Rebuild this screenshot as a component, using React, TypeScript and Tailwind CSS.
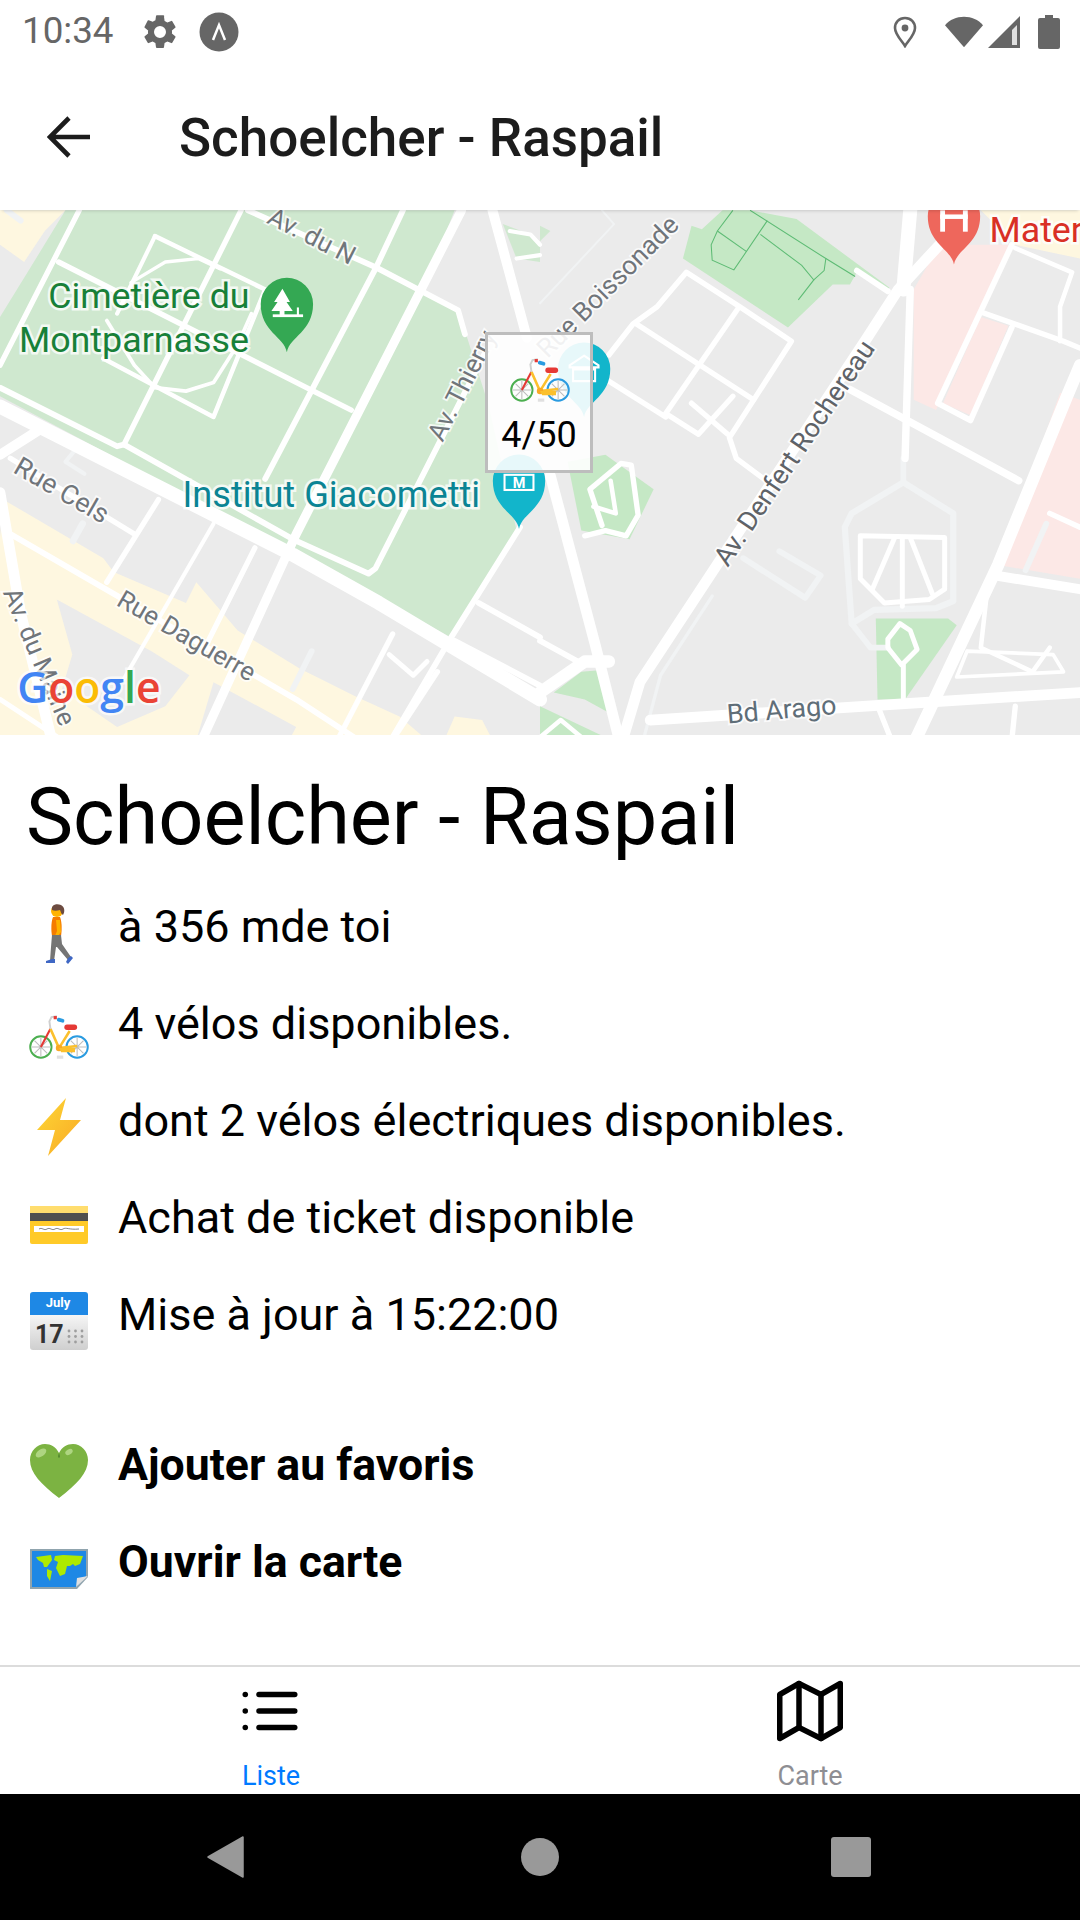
import { FiList, FiMap } from "react-icons/fi";

const roboto = { fontFamily: "Roboto, sans-serif" };

type Road = [string, number];

// coordinates below are in zoomed-crop units, the groups scale them back
const leftRoads: Road[] = [
  ["0,600 850,1030 1100,1170 1568,1450", 34],
  ["0,740 110,670", 24],
  ["230,30 0,480", 13],
  ["700,30 450,530 360,710", 13],
  ["1170,30 1090,200 770,810", 14],
  ["1340,30 860,970 590,1560", 22],
  ["720,30 1090,195 1330,320 1350,390", 14],
  ["170,180 900,550 1020,610", 13],
  ["450,105 340,330", 10],
  ["450,105 770,260 620,630 300,460", 11],
  ["380,240 480,180 575,170 640,200", 8],
  ["310,350 390,480 450,545 540,555 620,530 690,420 730,330", 9],
  ["0,545 340,715 360,710 860,990 1070,1085 1090,1070 1410,440", 14],
  ["1510,950 1310,1270 1140,1560", 14],
  ["30,750 390,970", 13],
  ["460,870 310,1110", 13],
  ["740,1010 590,1310", 13],
  ["620,940 360,1390", 10],
  ["30,970 860,1450 1040,1568", 14],
  ["0,850 60,1200 150,1568", 26],
  ["0,1450 180,1568", 12],
  ["1140,1260 980,1568", 13],
  ["1270,1370 1140,1568", 13],
  ["1130,1320 1200,1380 1240,1340", 12],
  ["1320,1280 1568,1410", 14],
  ["1390,1170 1568,1270", 14],
  ["1430,30 1530,400", 24],
  ["1480,90 1540,100 1568,130", 10],
  ["1500,170 1568,160", 10],
];

const leftFaint: Road[] = [
  ["215,730 190,760 245,795", 10],
  ["240,940 212,990", 16],
  ["905,1310 850,1420", 14],
  ["20,30 60,60", 14],
];

const rightRoads: Road[] = [
  ["1160,130 1040,260 950,400 520,1050 290,1400 240,1568", 26],
  ["1568,480 1530,570 1330,1060 1090,1568", 30],
  ["1075,30 1055,260", 34],
  ["1075,260 1060,750", 18],
  ["900,550 1390,815", 18],
  ["1320,1090 1568,1130", 24],
  ["320,1510 1568,1430", 26],
  ["200,450 270,360 340,310 425,210 580,310 730,410 550,690 570,750 650,810", 13],
  ["280,360 620,580", 13],
  ["575,315 365,620 460,680 560,570", 13],
  ["440,590 545,680", 13],
  ["190,520 365,630", 13],
  ["920,205 1010,265", 14],
  ["1370,130 1155,590 1250,640 1370,370", 14],
  ["1280,325 1520,410 1568,430", 13],
  ["1380,140 1545,210 1510,310 1510,410", 11],
  ["1480,910 1568,950", 13],
  ["930,975 1175,980 1175,1130 1130,1160 1000,1170 930,1100 930,975", 12],
  ["1030,980 965,1130", 12],
  ["1052,980 1052,1180", 12],
  ["1075,980 1140,1145", 12],
  ["130,975 190,960 250,975 285,915 265,770 235,765 145,840 180,945", 13],
  ["205,815 220,910 155,890", 11],
  ["1010,1300 1050,1350 1095,1305 1075,1250 1045,1230 1010,1275 1010,1300", 12],
  ["1055,1350 1055,1450", 12],
  ["30,800 160,1290 230,1568", 26],
  ["0,1280 110,1340", 14],
  ["0,1430 130,1340 200,1340", 30],
  ["1300,1120 1280,1300 1430,1370 1480,1300", 11],
  ["1240,1310 1210,1385 1520,1370 1490,1320 1240,1310", 9],
  ["1380,1470 1370,1568", 13],
  ["985,1480 1020,1568", 13],
  ["0,1560 60,1510 130,1568", 11],
];

const rightFaint: Road[] = [
  ["1055,820 1200,910 1200,1165 1150,1185 970,1190 905,1230 885,950 905,910 1055,820", 15],
  ["1055,750 1055,820", 14],
  ["695,1020 815,1090 770,1155 590,1040", 14],
  ["905,1230 960,1300 1010,1300", 14],
  ["1470,940 1410,1075", 14],
  ["0,300 215,70 180,30", 5],
  ["500,1150 350,1380 300,1568", 8],
];

function Roads({ list, color }: { list: Road[]; color: string }) {
  return (
    <g fill="none" stroke={color} strokeLinejoin="round" strokeLinecap="round">
      {list.map(([points, width], i) => (
        <polyline key={i} points={points} strokeWidth={width * 1.2} />
      ))}
    </g>
  );
}

function Label({ x, y, size, color, rotate, children }: { x: number; y: number; size: number; color: string; rotate?: number; children: string }) {
  return (
    <text
      x={x}
      y={y}
      fontSize={size}
      fill={color}
      stroke="#ffffff"
      strokeOpacity={0.75}
      strokeWidth={size * 0.14}
      paintOrder="stroke"
      transform={rotate ? `rotate(${rotate} ${x} ${y})` : undefined}
      style={roboto}
    >
      {children}
    </text>
  );
}

function Pin({ x, y, color }: { x: number; y: number; color: string }) {
  // x,y is the tip of the pin
  return <path d={`M${x} ${y}c-8-45-76-60-76-140a76 76 0 0 1 152 0c0 80-68 95-76 140z`} fill={color} />;
}

function MapView() {
  return (
    <svg viewBox="0 210 1080 525" className="block w-full h-full">
      <rect x="0" y="210" width="1080" height="525" fill="#ebebeb" />
      <g transform="translate(0 200) scale(0.3444)">
        <polygon points="0,30 190,30 130,90 70,180 0,130" fill="#fef7e0" />
        <polygon points="190,30 1320,30 1230,260 1330,320 1350,380 1420,600 1500,960 1310,1270 1090,1150 0,570 0,340 80,210" fill="#cfe8cf" />
        <polygon points="1460,70 1540,100 1568,130 1568,180 1500,170" fill="#cfe8cf" />
        <polygon points="10,870 300,1040 330,1080 540,1170 570,1110 690,1250 870,1360 1030,1440 1160,1500 1240,1568 820,1568 350,1568 0,1568 0,980" fill="#fef7e0" />
        <polygon points="165,1160 440,1310 550,1380 480,1470 340,1530 180,1420 210,1320" fill="#ebebeb" />
        <polygon points="620,1400 860,1530 840,1568 570,1568" fill="#ebebeb" />
        <polygon points="1290,1568 1320,1500 1400,1510 1430,1568" fill="#fef7e0" />
        <Roads list={leftFaint} color="#f1f3f4" />
        <Roads list={leftRoads} color="#ffffff" />
        <Pin x={833} y={442} color="#34a853" />
        <path d="M820 258l22 38h-10l18 26h-24v12h-14v-12h-24l18-26h-10z" fill="#ffffff" />
        <rect x="792" y="332" width="88" height="8" fill="#ffffff" />
        <rect x="862" y="312" width="6" height="22" fill="#ffffff" />
        <Pin x={1507} y={955} color="#12b5cb" />
        <rect x="1465" y="798" width="84" height="44" fill="none" stroke="#ffffff" strokeWidth="6" />
        <text x="1507" y="837" fontSize="42" fontWeight="700" fill="#ffffff" textAnchor="middle" style={roboto}>M</text>
        <Label x={140} y={315} size={104} color="#188038">Cimetière du</Label>
        <Label x={55} y={440} size={104} color="#188038">Montparnasse</Label>
        <Label x={530} y={890} size={105} color="#0b8494">Institut Giacometti</Label>
        <Label x={772} y={65} size={75} color="#70757a" rotate={27}>Av. du N</Label>
        <Label x={35} y={790} size={78} color="#70757a" rotate={30}>Rue Cels</Label>
        <Label x={335} y={1175} size={75} color="#70757a" rotate={30}>Rue Daguerre</Label>
        <Label x={8} y={1140} size={75} color="#70757a" rotate={67}>Av. du Maine</Label>
        <Label x={1285} y={705} size={75} color="#70757a" rotate={-63}>Av. Thierry</Label>
        <text x="50" y="1460" fontSize="124" fontWeight="600" stroke="#ffffff" strokeOpacity={0.7} strokeWidth="14" paintOrder="stroke" style={{ fontFamily: '"Open Sans", sans-serif' }}>
          <tspan fill="#4285f4">G</tspan>
          <tspan fill="#ea4335">o</tspan>
          <tspan fill="#fbbc05">o</tspan>
          <tspan fill="#4285f4">g</tspan>
          <tspan fill="#34a853">l</tspan>
          <tspan fill="#ea4335">e</tspan>
        </text>
      </g>
      <g transform="translate(540 200) scale(0.3444)">
        <polygon points="530,30 610,30 745,55 1015,255 1000,265 920,210 900,245 850,245 720,370 415,170 440,75 470,85" fill="#c5e8c5" />
        <polygon points="80,760 190,740 330,840 260,985 120,960" fill="#c5e8c5" />
        <polygon points="975,1215 1185,1215 1210,1235 1060,1450 980,1450" fill="#c5e8c5" />
        <polygon points="40,1430 120,1370 180,1365 220,1500 130,1450" fill="#c5e8c5" />
        <polygon points="0,1470 190,1560 0,1568" fill="#c5e8c5" />
        <polygon points="0,75 30,90 0,120" fill="#cfe8cf" />
        <polygon points="1160,130 1085,260 1085,580 1150,610 1370,130" fill="#fce8e6" />
        <polygon points="1280,340 1360,365 1250,625 1170,590" fill="#fce8e6" />
        <polygon points="1510,560 1568,580 1568,1100 1330,1060" fill="#fce8e6" />
        <polygon points="1280,30 1568,30 1568,170 1380,130" fill="#fef7e0" />
        <g fill="none" stroke="#5dbb74" strokeWidth="3">
          <polyline points="560,30 515,90 497,130 500,175 563,203 660,60" />
          <polyline points="515,90 600,150" />
          <polyline points="610,30 830,170 915,222" />
          <polyline points="640,100 760,190 795,232 750,290" />
          <polyline points="830,170 825,205 795,232" />
        </g>
        <Roads list={rightFaint} color="#f1f3f4" />
        <Roads list={rightRoads} color="#ffffff" />
        <Pin x={128} y={630} color="#12b5cb" />
        <Pin x={1202} y={187} color="#ee675c" />
        <rect x="1162" y="30" width="14" height="62" fill="#ffffff" />
        <rect x="1228" y="30" width="14" height="62" fill="#ffffff" />
        <rect x="1162" y="42" width="80" height="13" fill="#ffffff" />
        <path d="M128 452l42 28v6h-84v-6zM96 492h64v34h-64z" fill="none" stroke="#ffffff" strokeWidth="6" />
        <Label x={1305} y={122} size={104} color="#d93025">Mater</Label>
        <Label x={22} y={462} size={76} color="#70757a" rotate={-45}>Rue Boissonade</Label>
        <Label x={545} y={1068} size={78} color="#5f6368" rotate={-56}>Av. Denfert Rochereau</Label>
        <Label x={545} y={1520} size={78} color="#5f6e78" rotate={-5}>Bd Arago</Label>
      </g>
    </svg>
  );
}

function Walker() {
  return (
    <svg viewBox="0 0 64 64" className="w-[64px] h-[64px] shrink-0 mt-[14px]">
      <circle cx="30" cy="9" r="6" fill="#ffb300" />
      <path d="M25 8c-1-5 4-7 9-5 4 2 4 7 2 10-2-1-2-3-3-5-3 1-6 1-8 0z" fill="#6d4c41" />
      <path d="M26 15h7c2 5 2 13 1 19h-9c-1-6-1-14 1-19z" fill="#f57c00" />
      <path d="M29 18h4l1 12-3 4h-3l2-5z" fill="#ffb300" />
      <path d="M25 33h9l1 9 9 13-3 3-11-13-1 0-2 14h-4l1-14z" fill="#757575" />
      <path d="M19 59l6-2h3v4h-9zM41 56l3-2 2 2-5 6-2-2z" fill="#3f67c4" />
    </svg>
  );
}

function Bike({ className }: { className: string }) {
  return (
    <svg viewBox="2 2 60 60" className={className}>
      <g fill="none">
        <circle cx="15" cy="47" r="10" stroke="#4caf50" strokeWidth="1.8" />
        <circle cx="49" cy="47" r="10" stroke="#2a9be0" strokeWidth="1.8" />
        <path d="M15 38v18M6 47h18M9 41l12 12M21 41l-12 12M49 38v18M40 47h18M43 41l12 12M55 41l-12 12" stroke="#bdbdbd" strokeWidth="1" />
        <path d="M15 47l9-17" stroke="#e53935" strokeWidth="2" />
        <path d="M24 30l8 18 10-16M32 48l17-2" stroke="#fbc02d" strokeWidth="2.4" />
        <path d="M24 30l-1-7 2-4 5-1" stroke="#cfcfcf" strokeWidth="1.8" />
      </g>
      <rect x="27" y="18" width="3" height="3" fill="#e53935" />
      <rect x="30" y="20" width="7" height="3.5" rx="1.5" fill="#2a9be0" transform="rotate(15 33 22)" />
      <rect x="37" y="26" width="12" height="5" rx="2.5" fill="#e53935" />
      <circle cx="32" cy="48" r="3" fill="#f9a825" />
      <path d="M32 48h15v4H34z" fill="#fbc02d" />
      <rect x="30" y="55" width="6" height="3" fill="#e0e0e0" />
    </svg>
  );
}

function Lightning() {
  return (
    <svg viewBox="0 0 64 64" className="w-[64px] h-[64px] shrink-0 mt-[14px]">
      <defs>
        <linearGradient id="bolt" x1="0" y1="0" x2="1" y2="1">
          <stop offset="0" stopColor="#fdd835" />
          <stop offset="1" stopColor="#f9a825" />
        </linearGradient>
      </defs>
      <path d="M39 2L10 34h18L21 60l33-36H33z" fill="url(#bolt)" strokeLinejoin="round" />
    </svg>
  );
}

function Card() {
  return (
    <svg viewBox="0 0 64 64" className="w-[64px] h-[64px] shrink-0 mt-[14px]">
      <rect x="3" y="13" width="58" height="38" rx="2" fill="#ffca28" />
      <rect x="3" y="13" width="58" height="8" fill="#ffdd6e" />
      <rect x="3" y="20" width="58" height="8" fill="#4f4f4f" />
      <rect x="7" y="33" width="50" height="6" fill="#ffffff" />
      <path d="M12 36c3-2 5 2 8 0s5 2 8 0 5 2 8 0 6 1 16 0" fill="none" stroke="#666666" strokeWidth="0.8" />
    </svg>
  );
}

function Calendar() {
  const dots = [0, 1, 2].flatMap((r) => [0, 1, 2].map((c) => [42 + c * 6.5, 41 + r * 5.5]));
  return (
    <svg viewBox="0 0 64 64" className="w-[64px] h-[64px] shrink-0 mt-[14px]">
      <defs>
        <linearGradient id="page" x1="0" y1="0" x2="0" y2="1">
          <stop offset="0.4" stopColor="#f5f5f5" />
          <stop offset="1" stopColor="#cfcfcf" />
        </linearGradient>
      </defs>
      <rect x="3" y="2" width="58" height="58" rx="3" fill="url(#page)" />
      <path d="M3 5a3 3 0 0 1 3-3h52a3 3 0 0 1 3 3v20H3z" fill="#1e88e5" />
      <text x="31" y="17" fontSize="13" fontWeight="700" fill="#ffffff" textAnchor="middle" style={roboto}>July</text>
      <text x="8" y="53" fontSize="25" fontWeight="700" fill="#333333" style={roboto}>17</text>
      {dots.map(([x, y], i) => (
        <circle key={i} cx={x} cy={y} r="1.4" fill="#9e9e9e" />
      ))}
    </svg>
  );
}

function Heart() {
  return (
    <svg viewBox="0 0 64 64" className="w-[64px] h-[64px] shrink-0 mt-[14px]">
      <path d="M32 58C14 44 3 33 3 20 3 11 10 4 18 4c6 0 11 3 14 9 3-6 8-9 14-9 8 0 15 7 15 16 0 13-11 24-29 38z" fill="#7cb342" />
      <path d="M32 13c-1 2-1 4-1 4l1 1 1-1s0-2-1-4z" fill="#558b2f" />
      <ellipse cx="14" cy="13" rx="6" ry="3.5" fill="#aed581" transform="rotate(-35 14 13)" />
      <ellipse cx="42" cy="12" rx="4" ry="2.5" fill="#aed581" transform="rotate(-30 42 12)" />
    </svg>
  );
}

function WorldMap() {
  return (
    <svg viewBox="0 0 64 64" className="w-[64px] h-[64px] shrink-0 mt-[14px]">
      <path d="M3 12h58v28L50 52H3z" fill="#90a4ae" />
      <path d="M5 14h54v25L49 50H5z" fill="#1e88e5" />
      <path d="M9 20l15-2 1 5-5 7-3 0-1-4-5-3zM20 32l5 2-2 10-3-5zM28 19l8-1 20 1-3 8-5 2-2-2-3 2-3 0-2 8-5 2-4-8 2-6-4-2z" fill="#aeea00" />
      <path d="M49 50l1-9 11-2z" fill="#e0e0e0" />
    </svg>
  );
}

function StatusBar() {
  return (
    <div className="h-[63px] shrink-0 flex items-center pl-[22px] pr-[20px] bg-white text-[#666666]">
      <span className="text-[36.75px] leading-none" style={roboto}>10:34</span>
      <svg viewBox="0 0 24 24" className="w-[40px] h-[40px] ml-[26px]" fill="#666666">
        <path d="M19.14 12.94c.04-.3.06-.61.06-.94s-.02-.64-.07-.94l2.03-1.58a.5.5 0 0 0 .12-.61l-1.92-3.32a.5.5 0 0 0-.59-.22l-2.39.96c-.5-.38-1.03-.7-1.62-.94l-.36-2.54A.48.48 0 0 0 13.92 2h-3.84a.48.48 0 0 0-.47.41l-.36 2.54c-.59.24-1.13.57-1.62.94l-2.39-.96a.49.49 0 0 0-.59.22L2.73 8.87a.48.48 0 0 0 .12.61l2.03 1.58c-.05.3-.08.62-.08.94s.02.64.07.94l-2.03 1.58a.5.5 0 0 0-.12.61l1.92 3.32c.12.22.37.29.59.22l2.39-.96c.5.38 1.03.7 1.62.94l.36 2.54c.05.24.24.41.48.41h3.84c.24 0 .44-.17.47-.41l.36-2.54c.59-.24 1.13-.56 1.62-.94l2.39.96c.22.08.47 0 .59-.22l1.92-3.32a.48.48 0 0 0-.12-.61l-2.01-1.58zM12 15.6a3.6 3.6 0 1 1 0-7.2 3.6 3.6 0 0 1 0 7.2z" />
      </svg>
      <svg viewBox="0 0 40 40" className="w-[40px] h-[40px] ml-[19px]">
        <circle cx="20" cy="20" r="19.5" fill="#666666" />
        <path d="M14 28l6-15 6 15" fill="none" stroke="#ffffff" strokeWidth="2.5" />
      </svg>
      <div className="flex-1" />
      <svg viewBox="0 0 24 32" className="w-[24px] h-[32px]">
        <path d="M12 2C6 2 2 6.5 2 12c0 6.5 7 13 10 18 3-5 10-11.5 10-18 0-5.5-4-10-10-10z" fill="none" stroke="#666666" strokeWidth="2.6" />
        <circle cx="12" cy="12" r="3.4" fill="#666666" />
      </svg>
      <svg viewBox="0 0 40 32" className="w-[38px] h-[32px] ml-[28px]">
        <path d="M0 9C5 3 12 0 20 0s15 3 20 9L20 32z" fill="#666666" />
      </svg>
      <svg viewBox="0 0 32 32" className="w-[32px] h-[32px] ml-[5px]">
        <path d="M32 0v32H0z" fill="#666666" />
        <path d="M24 14v15h5V9z" fill="#ffffff" opacity="0.8" />
      </svg>
      <svg viewBox="0 0 22 34" className="w-[22px] h-[34px] ml-[18px]">
        <path d="M7 0h8v3h5a2 2 0 0 1 2 2v27a2 2 0 0 1-2 2H2a2 2 0 0 1-2-2V5a2 2 0 0 1 2-2h5z" fill="#666666" />
      </svg>
    </div>
  );
}

function Row({ icon, text, bold }: { icon: React.ReactNode; text: string; bold?: boolean }) {
  return (
    <div className="h-[97px] flex items-center gap-[27px]">
      {icon}
      <span className={`leading-[50px] text-black ${bold ? "text-[44.625px] font-bold" : "text-[45px] font-normal"}`} style={roboto}>
        {text}
      </span>
    </div>
  );
}

export default function App() {
  return (
    <div className="w-[1080px] h-[1920px] flex flex-col bg-white overflow-hidden" style={roboto}>
      <StatusBar />

      {/* Header */}
      <header className="h-[147px] shrink-0 flex items-center bg-white relative z-10 shadow-[0_3px_3px_-2px_rgba(0,0,0,0.15)]">
        <svg viewBox="0 0 44 42" className="w-[44px] h-[42px] ml-[47px]">
          <path d="M43 21H4M22 2L3 21l19 19" fill="none" stroke="#1c1c1c" strokeWidth="4.6" />
        </svg>
        <h1 className="ml-[88px] mt-[4px] text-[53px] leading-none font-medium text-[#1c1c1c]">Schoelcher - Raspail</h1>
      </header>

      {/* Map with the station marker */}
      <div className="h-[525px] shrink-0 relative">
        <MapView />
        <div className="absolute left-[485px] top-[122px] w-[108px] h-[141px] border-[3px] border-[#bdbdbd] bg-white/90 flex flex-col items-center">
          <Bike className="w-[64px] h-[64px] mt-[7px] ml-[2px] shrink-0" />
          <span className="text-[36px] leading-[42px] text-black mt-[8px]">4/50</span>
        </div>
      </div>

      {/* Station details */}
      <main className="flex-1 pl-[27px] pt-[40px]">
        <h2 className="-ml-[1px] text-[79.25px] leading-[84px] font-normal text-black mb-[19px]">Schoelcher - Raspail</h2>
        <Row icon={<Walker />} text="à 356 mde toi" />
        <Row icon={<Bike className="w-[64px] h-[64px] shrink-0 mt-[14px]" />} text="4 vélos disponibles." />
        <Row icon={<Lightning />} text="dont 2 vélos électriques disponibles." />
        <Row icon={<Card />} text="Achat de ticket disponible" />
        <Row icon={<Calendar />} text="Mise à jour à 15:22:00" />
        <div className="mt-[53px]">
          <Row icon={<Heart />} text="Ajouter au favoris" bold />
          <Row icon={<WorldMap />} text="Ouvrir la carte" bold />
        </div>
      </main>

      {/* Tab bar */}
      <nav className="h-[129px] shrink-0 flex border-t-[2px] border-[#dcdcdc] bg-white">
        <div className="flex-1 flex flex-col items-center">
          <FiList size={66} color="#000000" className="mt-[11px] shrink-0" />
          <span className="text-[27px] leading-[30px] mt-[17px] ml-[2px] text-[#007aff]">Liste</span>
        </div>
        <div className="flex-1 flex flex-col items-center">
          <FiMap size={66} color="#000000" className="mt-[11px] shrink-0" />
          <span className="text-[27px] leading-[30px] mt-[17px] text-[#8e8e93]">Carte</span>
        </div>
      </nav>

      {/* Android navigation bar */}
      <div className="h-[126px] shrink-0 bg-black flex items-center">
        <svg viewBox="0 0 37 42" className="w-[37px] h-[42px] ml-[207px]">
          <path d="M36 1v40L1 21z" fill="#999999" stroke="#999999" strokeWidth="1.5" strokeLinejoin="round" />
        </svg>
        <div className="w-[38px] h-[38px] rounded-full bg-[#999999] ml-[277px]" />
        <div className="w-[40px] h-[40px] rounded-[3px] bg-[#999999] ml-[272px]" />
      </div>
    </div>
  );
}
